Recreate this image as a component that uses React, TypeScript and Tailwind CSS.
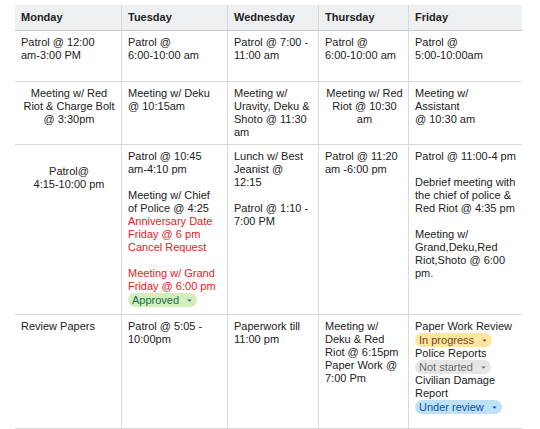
import React from "react";

type Item =
  | string
  | { red: string }
  | { chip: "approved" | "progress" | "notstarted" | "review" };

const chipStyles: Record<string, { cls: string; label: string; caret: string }> = {
  approved: { cls: "bg-[#d4edbc] text-[#11734b]", label: "Approved", caret: "#11734b" },
  progress: { cls: "bg-[#ffe5a0] text-[#6b4c16]", label: "In progress", caret: "#6b4c16" },
  notstarted: { cls: "bg-[#e6e6e6] text-[#6b6b6b]", label: "Not started", caret: "#6b6b6b" },
  review: { cls: "bg-[#bfe1f6] text-[#0a53a8]", label: "Under review", caret: "#0a53a8" },
};

function Chip({ kind }: { kind: string }) {
  const s = chipStyles[kind];
  return (
    <div className={`flex w-fit h-[14px] items-center rounded-full pl-[4px] pr-[5px] ${s.cls}`}>
      <span className="leading-[14px] whitespace-nowrap">{s.label}</span>
      <svg width="5" height="3" viewBox="0 0 5 3" className="ml-[8px]">
        <path d="M0.5 0.5 L4.5 0.5 L2.5 2.8 Z" fill={s.caret} />
      </svg>
    </div>
  );
}

function Lines({ items }: { items: Item[] }) {
  return (
    <>
      {items.map((it, i) => {
        if (typeof it === "string") {
          return (
            <div key={i} className="whitespace-nowrap h-[13px]">
              {it === "" ? "\u00a0" : it}
            </div>
          );
        }
        if ("red" in it) {
          return (
            <div key={i} className="whitespace-nowrap h-[13px] text-[#e5201f]">
              {it.red}
            </div>
          );
        }
        return <Chip key={i} kind={it.chip} />;
      })}
    </>
  );
}

function Cell({
  items,
  first,
  center,
  extra,
}: {
  items: Item[];
  first?: boolean;
  center?: boolean;
  extra?: string;
}) {
  return (
    <div
      className={`border-b border-[#d9d9dc] ${first ? "" : "border-l"} pl-[6px] pr-[4px] pt-[5px] ${
        center ? "flex flex-col items-center text-center" : ""
      } ${extra ?? ""}`}
    >
      <Lines items={items} />
    </div>
  );
}

const headers = ["Monday", "Tuesday", "Wednesday", "Thursday", "Friday"];

export default function App() {
  return (
    <div
      className="w-[540px] h-[429px] bg-white text-[11px] leading-[13px] text-[#222222] overflow-hidden"
      style={{ fontFamily: '"Liberation Sans", Arial, sans-serif' }}
    >
      <div className="pt-[5px] pl-[15px]">
        <div className="grid grid-cols-[106px_106px_91px_90px_114px] grid-rows-[26px_51px_63px_170px_114px]">
          {headers.map((h, i) => (
            <div
              key={h}
              className={`bg-[#eff0f2] border-b border-[#c6c6ca] ${
                i === 0 ? "" : "border-l border-l-[#d9d9dc]"
              } pl-[6px] flex items-center font-bold text-[#222222]`}
            >
              {h}
            </div>
          ))}

          {/* Row 1 */}
          <Cell first items={["Patrol @ 12:00", "am-3:00 PM"]} />
          <Cell items={["Patrol @", "6:00-10:00 am"]} />
          <Cell items={["Patrol @ 7:00 -", "11:00 am"]} />
          <Cell items={["Patrol @", "6:00-10:00 am"]} />
          <Cell items={["Patrol @", "5:00-10:00am"]} />

          {/* Row 2 */}
          <Cell first center items={["Meeting w/ Red", "Riot & Charge Bolt", "@ 3:30pm"]} />
          <Cell items={["Meeting w/ Deku", "@ 10:15am"]} />
          <Cell items={["Meeting w/", "Uravity, Deku &", "Shoto @ 11:30", "am"]} />
          <Cell center items={["Meeting w/ Red", "Riot @ 10:30", "am"]} />
          <Cell items={["Meeting w/", "Assistant", "@ 10:30 am"]} />

          {/* Row 3 */}
          <Cell first center extra="!pt-[20px]" items={["Patrol@", "4:15-10:00 pm"]} />
          <Cell
            items={[
              "Patrol @ 10:45",
              "am-4:10 pm",
              "",
              "Meeting w/ Chief",
              "of Police @ 4:25",
              { red: "Anniversary Date" },
              { red: "Friday @ 6 pm" },
              { red: "Cancel Request" },
              "",
              { red: "Meeting w/ Grand" },
              { red: "Friday @ 6:00 pm" },
              { chip: "approved" },
            ]}
          />
          <Cell items={["Lunch w/ Best", "Jeanist @", "12:15", "", "Patrol @ 1:10 -", "7:00 PM"]} />
          <Cell items={["Patrol @ 11:20", "am -6:00 pm"]} />
          <Cell
            items={[
              "Patrol @ 11:00-4 pm",
              "",
              "Debrief meeting with",
              "the chief of police &",
              "Red Riot @ 4:35 pm",
              "",
              "Meeting w/",
              "Grand,Deku,Red",
              "Riot,Shoto @ 6:00",
              "pm.",
            ]}
          />

          {/* Row 4 */}
          <Cell first items={["Review Papers"]} />
          <Cell items={["Patrol @ 5:05 -", "10:00pm"]} />
          <Cell items={["Paperwork till", "11:00 pm"]} />
          <Cell items={["Meeting w/", "Deku & Red", "Riot @ 6:15pm", "Paper Work @", "7:00 Pm"]} />
          <Cell
            items={[
              "Paper Work Review",
              { chip: "progress" },
              "Police Reports",
              { chip: "notstarted" },
              "Civilian Damage",
              "Report",
              { chip: "review" },
            ]}
          />
        </div>
      </div>
    </div>
  );
}
